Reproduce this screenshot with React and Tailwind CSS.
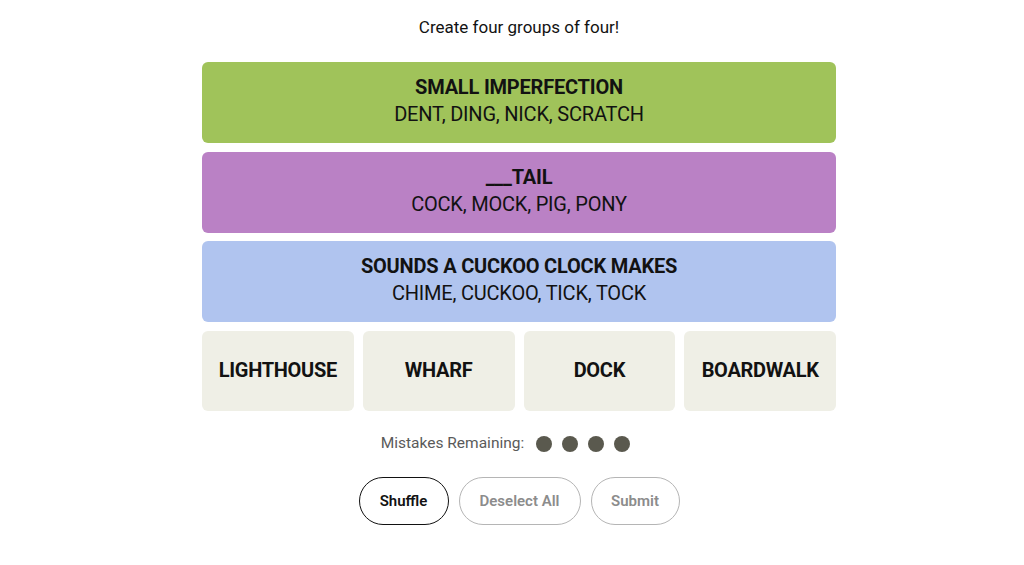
const solved = [
  { title: "SMALL IMPERFECTION", words: "DENT, DING, NICK, SCRATCH", color: "bg-[#a0c35a]" },
  { title: "___TAIL", words: "COCK, MOCK, PIG, PONY", color: "bg-[#ba81c5]" },
  { title: "SOUNDS A CUCKOO CLOCK MAKES", words: "CHIME, CUCKOO, TICK, TOCK", color: "bg-[#b0c4ef]" },
];

const tiles = ["LIGHTHOUSE", "WHARF", "DOCK", "BOARDWALK"];

export default function App() {
  return (
    <div className="min-h-screen bg-white pl-[14px] font-['Roboto','Liberation_Sans',sans-serif] text-[#121212]">
      <div className="mx-auto flex w-[634px] flex-col items-center pt-[16px]">
        <p className="text-[17px] leading-[23px]">Create four groups of four!</p>
        <div className="mt-[23px] flex w-full flex-col gap-[8.7px]">
          {solved.map((group) => (
            <div
              key={group.title}
              className={`${group.color} flex h-[81px] flex-col items-center justify-center rounded-[6px] pb-[3px] text-[20px] leading-[27px] tracking-[-0.2px]`}
            >
              <span className="font-bold">{group.title}</span>
              <span>{group.words}</span>
            </div>
          ))}
          <div className="grid grid-cols-4 gap-[9px]">
            {tiles.map((tile) => (
              <div
                key={tile}
                className="flex h-[80px] items-center justify-center rounded-[6px] bg-[#efefe6] pb-[2px] text-[20px] font-bold tracking-[-0.3px]"
              >
                {tile}
              </div>
            ))}
          </div>
        </div>
        <div className="mt-[21px] mr-[27px] flex items-center gap-[10px]">
          <span className="mr-[2px] text-[15.5px] text-[#5a5a5a]">Mistakes Remaining:</span>
          {[0, 1, 2, 3].map((i) => (
            <span key={i} className="h-[16px] w-[16px] rounded-full bg-[#5a594e]" />
          ))}
        </div>
        <div className="mt-[22px] flex gap-[10px]">
          <button className="h-[48px] w-[90px] rounded-full border border-[#121212] text-[15px] font-semibold">
            Shuffle
          </button>
          <button className="h-[48px] w-[122px] rounded-full border border-[#b5b5b5] text-[15px] font-semibold text-[#8c8c8c]">
            Deselect All
          </button>
          <button className="h-[48px] w-[89px] rounded-full border border-[#b5b5b5] text-[15px] font-semibold text-[#8c8c8c]">
            Submit
          </button>
        </div>
      </div>
    </div>
  );
}
